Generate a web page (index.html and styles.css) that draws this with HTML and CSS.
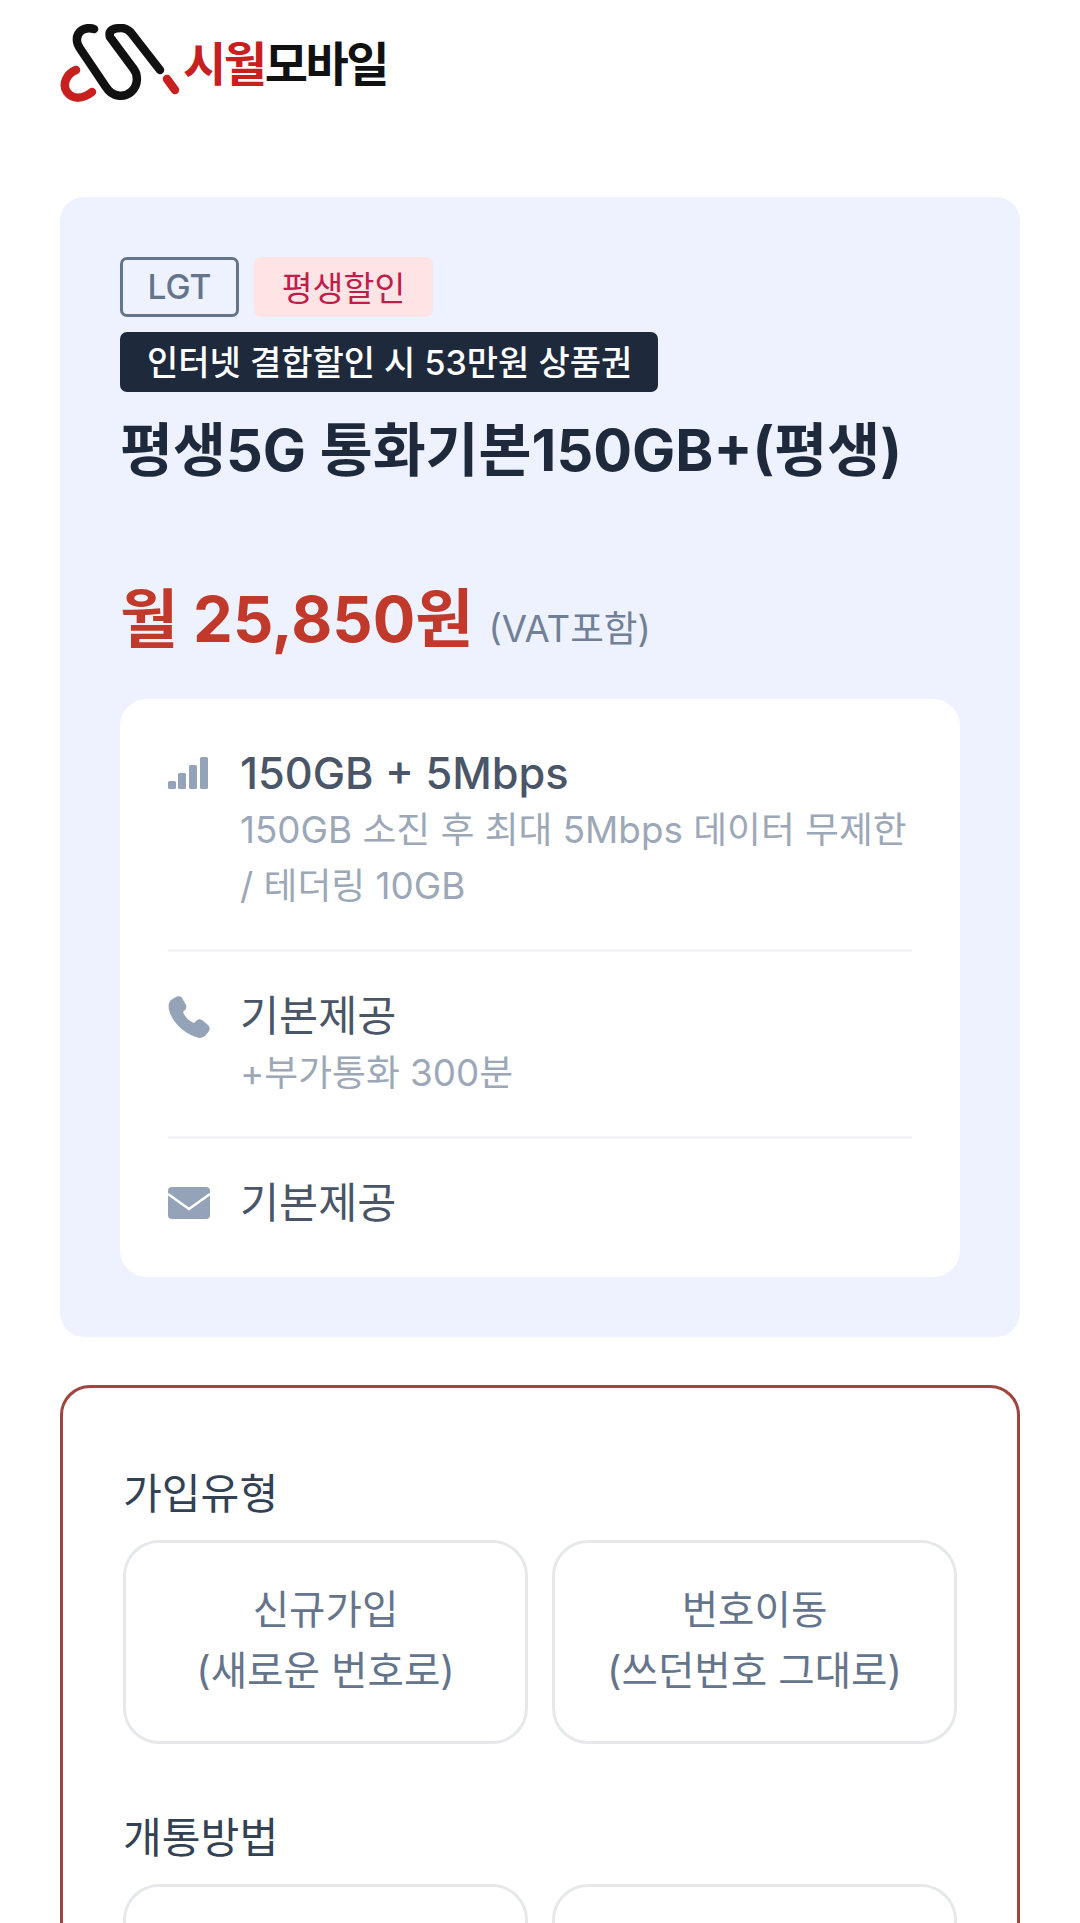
FILE: index.html
```html
<!DOCTYPE html>
<html lang="ko">
<head>
    <meta charset="UTF-8">
    <meta name="viewport" content="width=device-width, initial-scale=1.0">
    <title>시월모바일</title>
    <link rel="stylesheet" href="styles.css">
</head>
<body>
    <header class="header">
        <svg class="logo-mark" viewBox="0 0 122 78" fill="none" stroke-linecap="round" stroke-width="8.5">
            <path stroke="#111" d="M35 5C25 2 17 8 18 17C18 20 20 23 22 26L47 63C53 73 65 74 72 68C80 61 79 50 74 44L51 13C49 6 55 4 62 4C67 4 70 6 73 10L101 46"/>
            <path stroke="#c8201f" d="M17 46C7 50 3 61 8 68C14 76 24 75 33 68"/>
            <path stroke="#c8201f" d="M108 55L116 66"/>
        </svg>
        <span class="logo-text"><span class="logo-red">시월</span>모바일</span>
    </header>

    <section class="plan-card">
        <div class="tags">
            <span class="tag tag-carrier">LGT</span>
            <span class="tag tag-sale">평생할인</span>
        </div>
        <div class="promo">인터넷 결합할인 시 53만원 상품권</div>
        <h1 class="plan-name">평생5G 통화기본150GB+(평생)</h1>
        <div class="price">
            <strong>월 25,850원</strong>
            <span class="vat">(VAT포함)</span>
        </div>

        <div class="specs">
            <div class="spec">
                <svg class="spec-icon" viewBox="0 0 42 32" fill="#94a3b8">
                    <rect x="0" y="24" width="8" height="8" rx="1.5"/>
                    <rect x="10" y="16" width="8" height="16" rx="1.5"/>
                    <rect x="21" y="8" width="8" height="24" rx="1.5"/>
                    <rect x="32" y="0" width="8" height="32" rx="1.5"/>
                </svg>
                <div>
                    <div class="spec-title spec-title-data">150GB + 5Mbps</div>
                    <div class="spec-sub">150GB 소진 후 최대 5Mbps 데이터 무제한<br>/ 테더링 10GB</div>
                </div>
            </div>
            <div class="spec">
                <svg class="spec-icon spec-icon-phone" viewBox="0 0 42 42" fill="#94a3b8">
                    <path d="M8 1C10 0 13 0 14 2L18 9C19 11 18 13 17 14L15 16C17 21 21 25 26 27L28 25C30 23 32 23 34 24L40 29C42 31 42 33 41 35L38 39C36 41 34 42 31 42C17 38 5 28 1 14C0 9 1 6 3 4Z"/>
                </svg>
                <div>
                    <div class="spec-title">기본제공</div>
                    <div class="spec-sub">+부가통화 300분</div>
                </div>
            </div>
            <div class="spec">
                <svg class="spec-icon" viewBox="0 0 42 32">
                    <rect width="42" height="32" rx="4" fill="#94a3b8"/>
                    <path d="M0 7L21 22L42 7" fill="none" stroke="#fff" stroke-width="2.5"/>
                </svg>
                <div class="spec-title">기본제공</div>
            </div>
        </div>
    </section>

    <section class="order-form">
        <div class="field">
            <div class="field-label">가입유형</div>
            <div class="choices">
                <button class="choice" type="button">신규가입<br>(새로운 번호로)</button>
                <button class="choice" type="button">번호이동<br>(쓰던번호 그대로)</button>
            </div>
        </div>
        <div class="field">
            <div class="field-label">개통방법</div>
            <div class="choices">
                <button class="choice" type="button"></button>
                <button class="choice" type="button"></button>
            </div>
        </div>
    </section>
</body>
</html>
```

FILE: styles.css
```css
* {
    box-sizing: border-box;
}

html {
    overflow: hidden;
}

body {
    margin: 0;
    padding: 0 60px;
    height: 1923px;
    overflow: hidden;
    background: #fff;
    font-family: Inter, "Noto Sans CJK KR", sans-serif;
}

.header {
    display: flex;
    align-items: center;
    height: 197px;
    padding-bottom: 72px;
}

.logo-mark {
    width: 122px;
    height: 78px;
    margin-left: -1px;
    flex-shrink: 0;
}

.logo-text {
    margin: 0 0 4px 2px;
    font-size: 47px;
    font-weight: 700;
    letter-spacing: -2.4px;
    color: #111;
}

.logo-red {
    color: #c8201f;
}

.plan-card {
    height: 1140px;
    padding: 60px;
    background: #eef2ff;
    border-radius: 24px;
}

.tags {
    display: flex;
    gap: 15px;
}

.tag {
    display: flex;
    align-items: center;
    justify-content: center;
    height: 60px;
    padding-bottom: 2px;
    border-radius: 7px;
    font-size: 33.6px;
}

.tag-carrier {
    width: 119px;
    border: 3px solid #64748b;
    color: #64748b;
    font-weight: 500;
}

.tag-sale {
    width: 179px;
    background: #ffe4e6;
    color: #be1e4a;
}

.promo {
    display: flex;
    align-items: center;
    width: 538px;
    height: 60px;
    margin-top: 15px;
    padding: 0 0 4px 27px;
    background: #1e293b;
    border-radius: 7px;
    color: #fff;
    font-size: 34px;
    font-weight: 500;
}

.plan-name {
    margin: 22px 0 0;
    font-size: 57.6px;
    line-height: 72px;
    font-weight: 700;
    color: #1e293b;
}

.price {
    display: flex;
    align-items: baseline;
    gap: 15px;
    height: 90px;
    margin-top: 88px;
    color: #c0392b;
    line-height: 90px;
}

.price strong {
    font-size: 63.2px;
    font-weight: 700;
}

.vat {
    font-size: 36.6px;
    color: #718096;
}

.specs {
    margin-top: 35px;
    padding: 10px 48px;
    background: #fff;
    border-radius: 27px;
}

.spec {
    display: flex;
    gap: 30px;
    padding: 34px 0 35px;
    border-bottom: 3px solid #f1f5f9;
}

.spec:last-child {
    padding-bottom: 34px;
    border-bottom: none;
}

.spec-icon {
    width: 42px;
    flex-shrink: 0;
    align-self: flex-start;
    margin-top: 14px;
}

.spec-icon-phone {
    margin-top: 10px;
}

.spec-title {
    font-size: 42.5px;
    line-height: 60px;
    color: #4a5568;
}

.spec-title-data {
    font-size: 43.3px;
    font-weight: 500;
}

.spec-sub {
    margin-top: -1px;
    font-size: 36.8px;
    line-height: 56px;
    color: #9ca8b7;
}

.order-form {
    height: 700px;
    margin-top: 48px;
    padding: 76px 60px 0;
    border: 3px solid #a0453d;
    border-radius: 30px;
}

.field {
    margin-bottom: 64px;
}

.field-label {
    font-size: 42.2px;
    line-height: 60px;
    margin-bottom: 16px;
    color: #334155;
}

.choices {
    display: grid;
    grid-template-columns: 1fr 1fr;
    gap: 24px;
}

.choice {
    height: 204px;
    padding: 0 0 2px;
    background: #fff;
    border: 3px solid #e5e9ec;
    border-radius: 36px;
    font-family: inherit;
    font-size: 39.6px;
    line-height: 61px;
    color: #64748b;
}
```
